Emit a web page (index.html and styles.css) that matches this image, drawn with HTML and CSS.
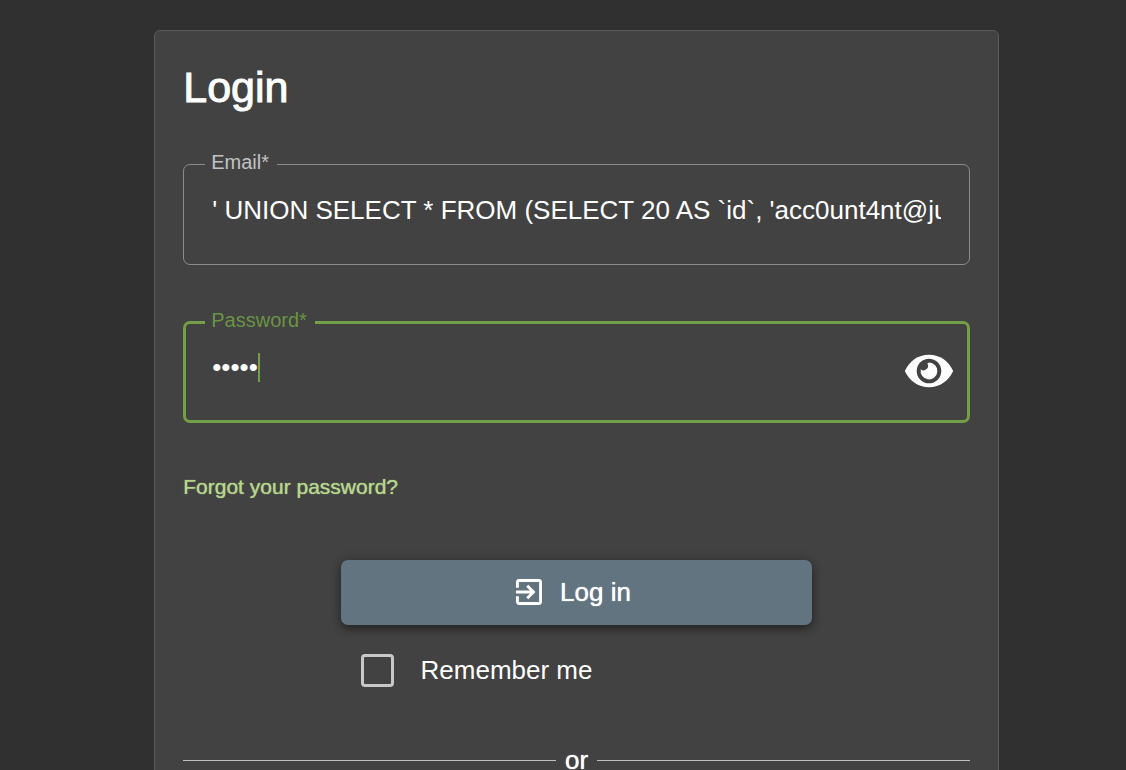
FILE: index.html
```html
<!DOCTYPE html>
<html lang="en">
<head>
<meta charset="utf-8">
<meta name="viewport" content="width=device-width, initial-scale=1">
<title>Login</title>
<link rel="stylesheet" href="styles.css">
</head>
<body>
<main class="card">
  <h1 class="title">Login</h1>
  <form class="form">
    <fieldset class="field">
      <legend class="notch"><label for="email">Email*</label></legend>
      <input class="field-input" id="email" type="text" value="' UNION SELECT * FROM (SELECT 20 AS `id`, 'acc0unt4nt@juice-sh.op' AS `email`">
    </fieldset>
    <fieldset class="field field-active">
      <legend class="notch"><label for="password">Password*</label></legend>
      <div class="field-row">
        <input class="field-input" id="password" type="password" value="12345">
        <span class="caret"></span>
        <button class="reveal" type="button" aria-label="Show password">
          <svg viewBox="0 0 50 34" width="50" height="34" aria-hidden="true">
            <path fill="#fff" d="M.8 17C5.500 7 14 .8 25 .8S44.500 7 49.200 17C44.500 27 36 33.200 25 33.200S5.500 27 .8 17z"/>
            <circle cx="25" cy="17" r="12.3" fill="#424242"/>
            <path fill="#fff" d="M25 8.600a8.400 8.400 0 1 1-8.200 6.600 4.400 4.400 0 0 0 6.500-5.800z"/>
          </svg>
        </button>
      </div>
    </fieldset>
    <a class="forgot" href="#forgot">Forgot your password?</a>
    <div class="actions">
      <button class="login" type="submit">
        <svg viewBox="3 3 18 18" width="26" height="26" aria-hidden="true">
          <path fill="#fff" d="M10.09 15.59L11.5 17l5-5-5-5-1.41 1.41L12.67 11H3v2h9.67l-2.58 2.59zM19 3H5c-1.11 0-2 .9-2 2v4h2V5h14v14H5v-4H3v4c0 1.1.89 2 2 2h14c1.1 0 2-.9 2-2V5c0-1.1-.9-2-2-2z"/>
        </svg>
        <span>Log in</span>
      </button>
      <label class="remember"><input class="tick" type="checkbox"><span>Remember me</span></label>
    </div>
    <div class="divider"><span>or</span></div>
  </form>
</main>
</body>
</html>
```
FILE: styles.css
```css
* {
  box-sizing: border-box;
}

html {
  background: #303030;
}

body {
  margin: 0;
  padding-left: 27px;
  height: 100vh;
  overflow: hidden;
  color: #fff;
  font-family: "Liberation Sans", Helvetica, Arial, sans-serif;
}

.card {
  width: 75vw;
  min-height: 100vh;
  margin: 30px auto 0;
  padding: 28px;
  border: 1px solid #5a5a5a;
  border-radius: 6px;
  background: #424242;
}

.title {
  margin: 0 0 37px;
  font-size: 43px;
  line-height: 56px;
  font-weight: 400;
  -webkit-text-stroke: 1px #fff;
}

.field {
  min-width: 0;
  height: 113px;
  margin: 0 0 45px;
  padding: 0 28px;
  border: 1px solid #8c8c8c;
  border-radius: 7px;
}

.notch {
  margin-left: -7px;
  padding: 0 8px 4px 6px;
  color: #c2c2c2;
  font-size: 20px;
  line-height: 20px;
}

.field-input {
  display: block;
  width: 100%;
  height: 32px;
  margin: 18px 0 0;
  padding: 0;
  border: 0;
  outline: 0;
  background: transparent;
  color: #fff;
  font: 26px/32px "Liberation Sans", Helvetica, Arial, sans-serif;
}

.field-active {
  padding: 0 13px 0 26px;
  border: 3px solid #739f46;
}

.field-active .notch {
  color: #6b9344;
}

.field-active .field-input {
  margin-top: 17px;
}

.field-row {
  position: relative;
  display: flex;
  align-items: flex-start;
}

.caret {
  position: absolute;
  left: 46px;
  top: 19px;
  width: 2px;
  height: 29px;
  background: #739f46;
}

.reveal {
  flex: none;
  margin: 20px 0 0;
  padding: 0;
  border: 0;
  background: transparent;
}

.reveal svg {
  display: block;
}

.forgot,
.login span,
.divider span {
  text-shadow: 0 0 1px currentColor;
}

.forgot {
  display: block;
  width: max-content;
  margin-top: 52px;
  color: #b6d78c;
  font-size: 21px;
  line-height: 24px;
  text-decoration: none;
}

.actions {
  width: 60%;
  margin: 61px auto 0;
}

.login {
  display: flex;
  align-items: center;
  justify-content: center;
  gap: 18px;
  width: 100%;
  height: 65px;
  padding: 0 6px 2px 0;
  border: 0;
  border-radius: 7px;
  background: #62747f;
  box-shadow: 0 4px 8px rgba(0, 0, 0, 0.35), 0 1px 12px rgba(0, 0, 0, 0.2);
  color: #fff;
  font: 26px/32px "Liberation Sans", Helvetica, Arial, sans-serif;
}

.remember {
  display: flex;
  align-items: center;
  gap: 27px;
  width: max-content;
  margin: 28px 0 0 20px;
  font-size: 26px;
  line-height: 34px;
}

.tick {
  appearance: none;
  width: 33px;
  height: 33px;
  margin: 0;
  border: 3px solid #c8c8c8;
  border-radius: 4px;
}

.divider {
  display: flex;
  align-items: center;
  gap: 9px;
  margin-top: 57px;
  font-size: 26px;
  line-height: 32px;
}

.divider::before,
.divider::after {
  content: "";
  flex: 1;
  height: 1px;
  background: #c0c0c0;
}
```
